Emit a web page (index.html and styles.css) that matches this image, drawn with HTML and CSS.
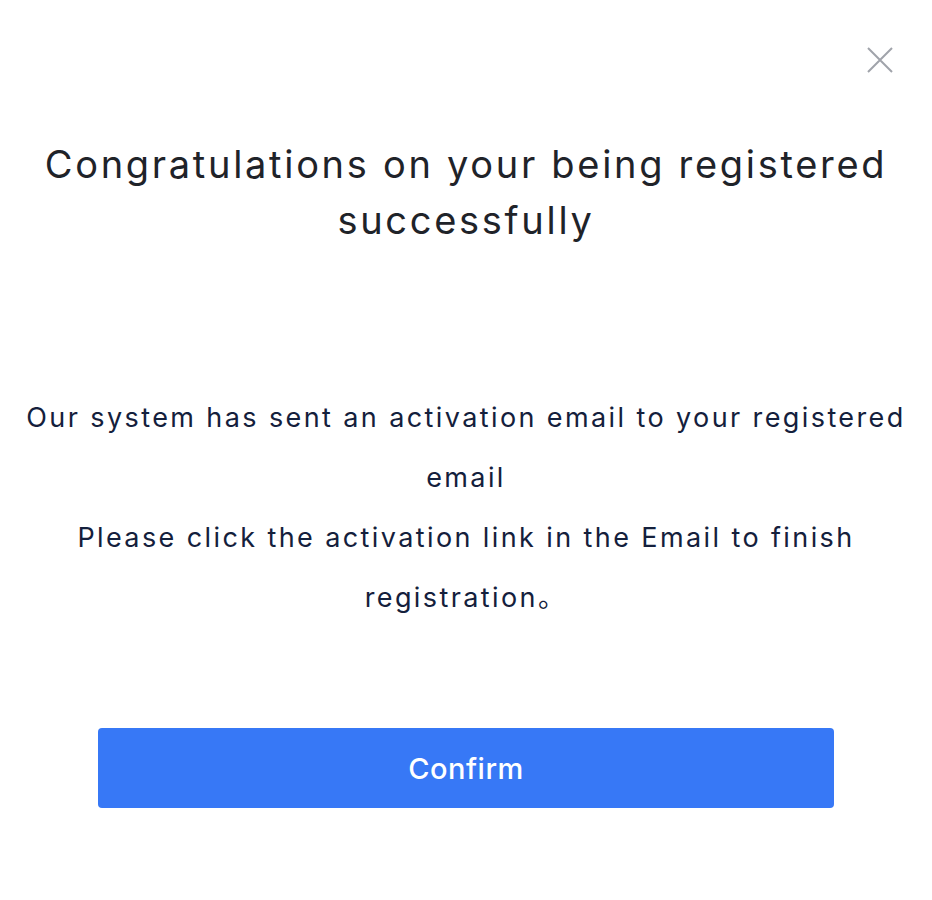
FILE: index.html
```html
<!DOCTYPE html>
<html lang="en">

<head>
    <meta charset="UTF-8">
    <title>Register success</title>
    <link rel="stylesheet" href="styles.css">
</head>

<body>
    <div class="dialog">
        <button class="close" aria-label="close">
            <svg width="26" height="26" viewBox="0 0 26 26">
                <path d="M1 1L25 25M25 1L1 25" stroke="#a0a3aa" stroke-width="2" fill="none" />
            </svg>
        </button>
        <h1 class="title">Congratulations on your being registered successfully</h1>
        <div class="msg">
            <p>Our system has sent an activation email to your registered email</p>
            <p>Please click the activation link in the Email to finish registration。</p>
        </div>
        <button class="confirm">Confirm</button>
    </div>
</body>

</html>
```

FILE: styles.css
```css
* {
    margin: 0;
    padding: 0;
}

body {
    background: #fff;
    font-family: Inter, "Noto Sans CJK SC", sans-serif;
}

.dialog {
    position: relative;
    width: 932px;
    height: 900px;
    padding-top: 136px;
    box-sizing: border-box;
    display: flex;
    flex-direction: column;
    align-items: center;
}

.close {
    position: absolute;
    top: 47px;
    right: 39px;
    border: none;
    background: none;
    cursor: pointer;
    line-height: 0;
}

.title {
    width: 880px;
    font-size: 38px;
    font-weight: 400;
    line-height: 56px;
    letter-spacing: 2.7px;
    color: #1f2329;
    text-align: center;
}

.msg {
    width: 892px;
    margin-top: 140px;
    font-size: 27px;
    line-height: 60px;
    letter-spacing: 2.4px;
    color: #14203c;
    text-align: center;
}

.confirm {
    width: 736px;
    height: 80px;
    margin-top: 100px;
    border: none;
    border-radius: 4px;
    background: #3778f6;
    color: #fff;
    font-family: inherit;
    font-size: 29px;
    font-weight: 500;
    letter-spacing: 0.5px;
    cursor: pointer;
}
```
